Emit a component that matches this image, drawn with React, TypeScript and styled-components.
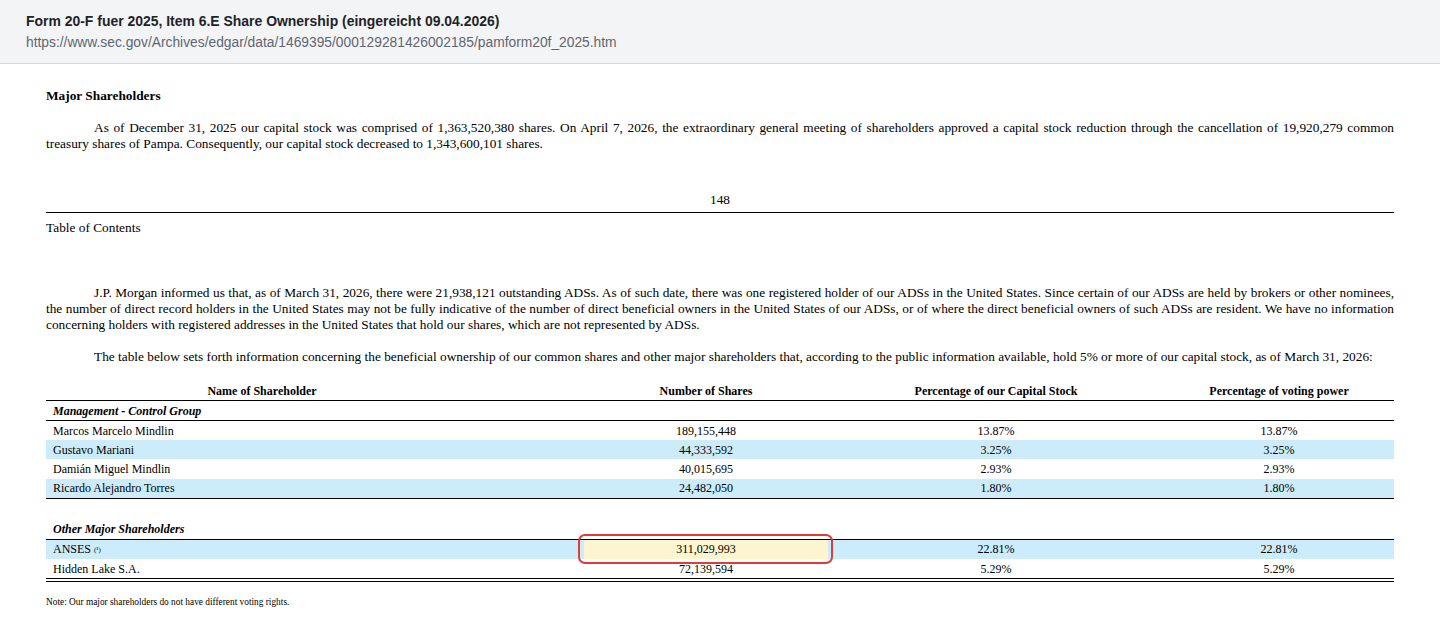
import React from "react";
import styled, { createGlobalStyle } from "styled-components";

const GlobalStyle = createGlobalStyle`
  html, body {
    margin: 0;
    padding: 0;
    background: #ffffff;
  }
`;

const Page = styled.div`
  width: 1440px;
  min-height: 625px;
  background: #ffffff;
`;

const SourceBar = styled.header`
  background: #f3f4f6;
  border-bottom: 1px solid #d4d8de;
  padding: 12px 26px 11px;
  font-family: "Liberation Sans", Arial, sans-serif;
`;

const SourceTitle = styled.div`
  font-size: 13.95px;
  font-weight: 700;
  line-height: 18px;
  color: #1f2328;
`;

const SourceUrl = styled.div`
  margin-top: 4px;
  font-size: 13.8px;
  line-height: 18px;
  color: #5f6670;
`;

const Document = styled.main`
  padding: 0 46px;
  font-family: "Liberation Serif", "Times New Roman", serif;
  font-size: 13.33px;
  line-height: 16px;
  color: #000000;
`;

const SectionHeading = styled.div`
  margin-top: 24px;
  font-weight: 700;
`;

const Para = styled.p<{ $gap: number }>`
  margin: ${(p) => p.$gap}px 0 0;
  text-align: justify;
  text-indent: 48px;
`;

const PageNumber = styled.div`
  margin-top: 40px;
  text-align: center;
`;

const PageRule = styled.hr`
  margin: 4px 0 0;
  border: 0;
  border-top: 1px solid #000000;
`;

const TocLink = styled.div`
  margin-top: 7px;
`;

const OwnershipTable = styled.table`
  margin-top: 16px;
  width: 100%;
  border-collapse: collapse;
  table-layout: fixed;
  font-size: 12px;
`;

const HeadCell = styled.th`
  height: 19px;
  padding: 0 4px;
  font-weight: 700;
  text-align: center;
  vertical-align: middle;
  line-height: 14px;
`;

const HeadRow = styled.tr`
  border-bottom: 1px solid #000000;
`;

const GroupRow = styled.tr<{ $ruled?: boolean }>`
  border-bottom: ${(p) => (p.$ruled ? "1px solid #000000" : "0")};
`;

const GroupCell = styled.td<{ $tall?: boolean }>`
  height: ${(p) => (p.$tall ? 20 : 19)}px;
  padding: 0 7px;
  font-weight: 700;
  font-style: italic;
  line-height: 14px;
  vertical-align: middle;
`;

const DataRow = styled.tr<{ $shaded: boolean; $rule?: "single" | "double" }>`
  background: ${(p) => (p.$shaded ? "#ccecfb" : "transparent")};
  border-bottom: ${(p) =>
    p.$rule === "single"
      ? "1px solid #000000"
      : p.$rule === "double"
      ? "4px double #000000"
      : "0"};
`;

const Cell = styled.td<{ $align?: "left" | "center"; $marked?: boolean }>`
  position: relative;
  height: 19.2px;
  padding: 0 7px;
  line-height: 14px;
  vertical-align: middle;
  text-align: ${(p) => p.$align ?? "center"};
  background: ${(p) => (p.$marked ? "#fdf5cf" : "transparent")};

  ${(p) =>
    p.$marked &&
    `
    &::after {
      content: "";
      position: absolute;
      top: -6px;
      bottom: -5px;
      left: -6px;
      right: -5px;
      border: 2.5px solid #e03a3a;
      border-radius: 7px;
      pointer-events: none;
    }
  `}
`;

const FootRef = styled.span`
  font-size: 7px;
  vertical-align: 1px;
`;

const Note = styled.div`
  margin-top: 15px;
  font-size: 9.33px;
  line-height: 11px;
`;

type Holder = {
  name: string;
  shares: string;
  capital: string;
  voting: string;
  footnote?: boolean;
  marked?: boolean;
};

const management: Holder[] = [
  { name: "Marcos Marcelo Mindlin", shares: "189,155,448", capital: "13.87%", voting: "13.87%" },
  { name: "Gustavo Mariani", shares: "44,333,592", capital: "3.25%", voting: "3.25%" },
  { name: "Damián Miguel Mindlin", shares: "40,015,695", capital: "2.93%", voting: "2.93%" },
  { name: "Ricardo Alejandro Torres", shares: "24,482,050", capital: "1.80%", voting: "1.80%" },
];

const others: Holder[] = [
  { name: "ANSES", shares: "311,029,993", capital: "22.81%", voting: "22.81%", footnote: true, marked: true },
  { name: "Hidden Lake S.A.", shares: "72,139,594", capital: "5.29%", voting: "5.29%" },
];

const HolderRow: React.FC<{ holder: Holder; index: number; rule?: "single" | "double" }> = ({
  holder,
  index,
  rule,
}) => (
  <DataRow $shaded={index % 2 === 1} $rule={rule}>
    <Cell $align="left">
      {holder.name}
      {holder.footnote && (
        <>
          {" "}
          <FootRef>(¹)</FootRef>
        </>
      )}
    </Cell>
    <Cell />
    <Cell $marked={holder.marked}>{holder.shares}</Cell>
    <Cell>{holder.capital}</Cell>
    <Cell>{holder.voting}</Cell>
  </DataRow>
);

export default function App() {
  return (
    <Page>
      <GlobalStyle />
      <SourceBar>
        <SourceTitle>Form 20-F fuer 2025, Item 6.E Share Ownership (eingereicht 09.04.2026)</SourceTitle>
        <SourceUrl>https://www.sec.gov/Archives/edgar/data/1469395/000129281426002185/pamform20f_2025.htm</SourceUrl>
      </SourceBar>
      <Document>
        <SectionHeading>Major Shareholders</SectionHeading>
        <Para $gap={16}>
          As of December 31, 2025 our capital stock was comprised of 1,363,520,380 shares. On April 7, 2026, the
          extraordinary general meeting of shareholders approved a capital stock reduction through the cancellation of
          19,920,279 common treasury shares of Pampa. Consequently, our capital stock decreased to 1,343,600,101 shares.
        </Para>
        <PageNumber>148</PageNumber>
        <PageRule />
        <TocLink>Table of Contents</TocLink>
        <Para $gap={49}>
          J.P. Morgan informed us that, as of March 31, 2026, there were 21,938,121 outstanding ADSs. As of such date,
          there was one registered holder of our ADSs in the United States. Since certain of our ADSs are held by
          brokers or other nominees, the number of direct record holders in the United States may not be fully
          indicative of the number of direct beneficial owners in the United States of our ADSs, or of where the direct
          beneficial owners of such ADSs are resident. We have no information concerning holders with registered
          addresses in the United States that hold our shares, which are not represented by ADSs.
        </Para>
        <Para $gap={16}>
          The table below sets forth information concerning the beneficial ownership of our common shares and other
          major shareholders that, according to the public information available, hold 5% or more of our capital
          stock, as of March 31, 2026:
        </Para>
        <OwnershipTable>
          <colgroup>
            <col style={{ width: 432 }} />
            <col style={{ width: 106 }} />
            <col style={{ width: 244 }} />
            <col style={{ width: 336 }} />
            <col style={{ width: 230 }} />
          </colgroup>
          <thead>
            <HeadRow>
              <HeadCell>Name of Shareholder</HeadCell>
              <HeadCell />
              <HeadCell>Number of Shares</HeadCell>
              <HeadCell>Percentage of our Capital Stock</HeadCell>
              <HeadCell>Percentage of voting power</HeadCell>
            </HeadRow>
          </thead>
          <tbody>
            <GroupRow $ruled>
              <GroupCell colSpan={5}>Management - Control Group</GroupCell>
            </GroupRow>
            {management.map((h, i) => (
              <HolderRow
                key={h.name}
                holder={h}
                index={i}
                rule={i === management.length - 1 ? "single" : undefined}
              />
            ))}
            <GroupRow>
              <GroupCell colSpan={5} $tall />
            </GroupRow>
            <GroupRow $ruled>
              <GroupCell colSpan={5} $tall>
                Other Major Shareholders
              </GroupCell>
            </GroupRow>
            {others.map((h, i) => (
              <HolderRow
                key={h.name}
                holder={h}
                index={i + 1}
                rule={i === others.length - 1 ? "double" : undefined}
              />
            ))}
          </tbody>
        </OwnershipTable>
        <Note>Note: Our major shareholders do not have different voting rights.</Note>
      </Document>
    </Page>
  );
}
